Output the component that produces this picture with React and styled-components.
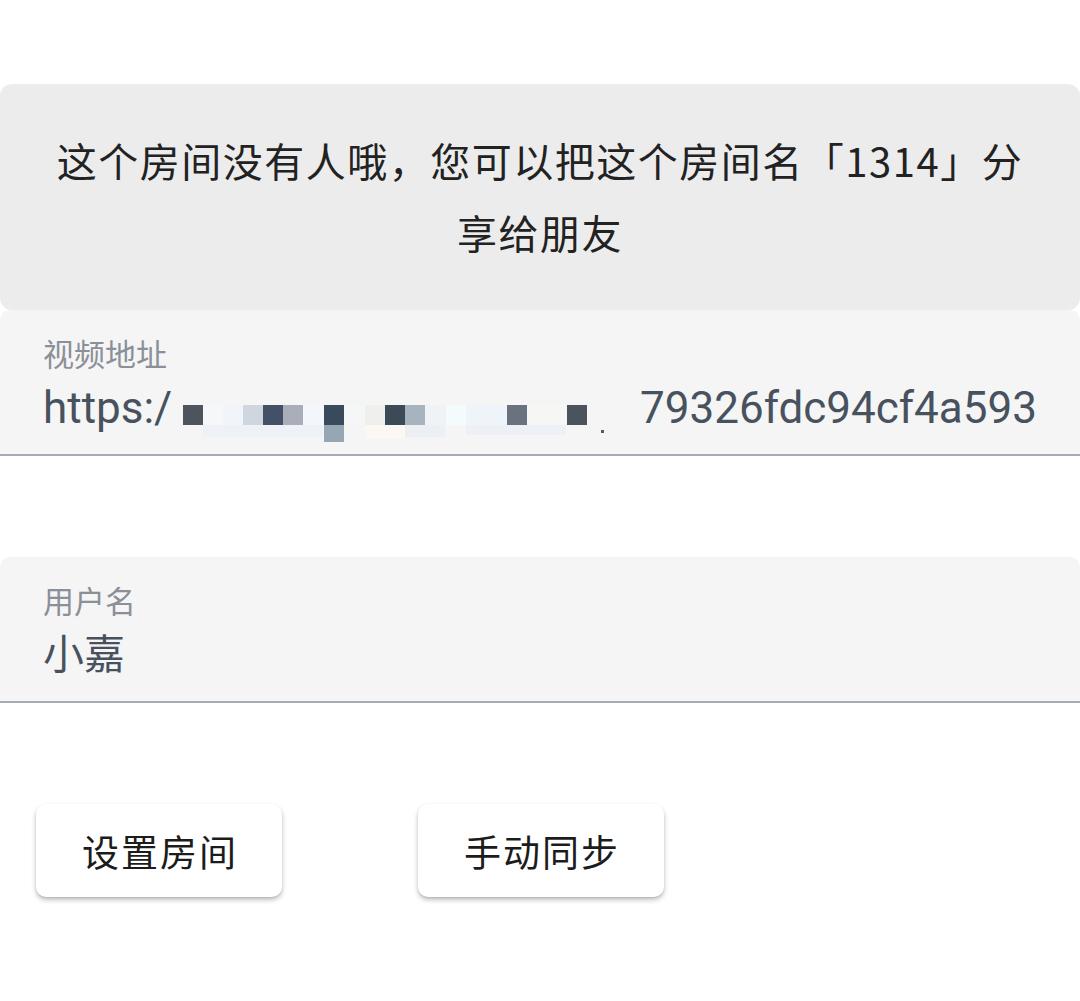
import styled, { createGlobalStyle } from 'styled-components';

const GlobalStyle = createGlobalStyle`
  html, body {
    margin: 0;
    padding: 0;
    background: #ffffff;
  }
  body {
    font-family: Roboto, "Noto Sans CJK SC", sans-serif;
    color: #222222;
  }
`;

const Page = styled.main`
  width: 1080px;
  min-height: 1001px;
  padding-top: 84px;
  box-sizing: border-box;
  display: flex;
  flex-direction: column;
`;

const Alert = styled.div`
  background: #ececec;
  border-radius: 12px;
  padding: 40px 48px 42px;
  text-align: center;
  font-size: 40px;
  line-height: 72px;
  letter-spacing: 1.5px;
  color: #222222;
  font-family: "Noto Sans CJK SC", sans-serif;
`;

const Field = styled.div`
  background: #f5f5f5;
  border-radius: 10px 10px 0 0;
  border-bottom: 2px solid #a6acb4;
  padding: 25px 43px 22px;
  display: flex;
  flex-direction: column;
  gap: 13px;
  margin-top: ${({ $gap }) => $gap || 0}px;
  overflow: hidden;
`;

const Label = styled.div`
  font-family: "Noto Sans CJK SC", sans-serif;
  font-size: 31px;
  line-height: 36px;
  color: #8b9098;
`;

const Value = styled.div`
  display: flex;
  align-items: flex-start;
  white-space: nowrap;
  font-size: ${({ $size }) => $size || 44}px;
  line-height: 48px;
  height: 48px;
  color: #48525e;
  font-family: Roboto, "Noto Sans CJK SC", sans-serif;
`;

const Prefix = styled.span`
  display: inline-block;
  width: 140px;
  flex: none;
`;

const Mosaic = styled.svg`
  flex: none;
  display: block;
  overflow: visible;
`;

const ButtonRow = styled.div`
  display: flex;
  gap: 136px;
  padding: 0 36px;
  margin-top: 101px;
`;

const Button = styled.button`
  width: 246px;
  height: 93px;
  border: none;
  border-radius: 10px;
  background: #ffffff;
  box-shadow: 0 3px 5px rgba(0, 0, 0, 0.24), 0 1px 2px rgba(0, 0, 0, 0.1);
  font-family: "Noto Sans CJK SC", sans-serif;
  font-size: 37px;
  letter-spacing: 2px;
  color: #1c1c1c;
  cursor: pointer;
  padding: 0 0 0 2px;
`;

// pixel blocks covering the censored part of the url
const blocks = [
  [0, 21, 20, 20, '#4d545e'],
  [20, 21, 20, 20, '#f6f7f9'],
  [40, 21, 20, 20, '#f1f4f8'],
  [60, 21, 20, 20, '#d0d6df'],
  [80, 21, 20, 20, '#445068'],
  [100, 21, 20, 20, '#aaaeba'],
  [120, 21, 21, 20, '#f3f6fa'],
  [141, 21, 20, 20, '#3a4a5e'],
  [141, 41, 20, 17, '#97a6b3'],
  [161, 21, 21, 20, '#f5f6f7'],
  [182, 21, 20, 20, '#efefed'],
  [202, 21, 20, 20, '#3c4a58'],
  [222, 21, 20, 20, '#a7b3bd'],
  [242, 21, 21, 20, '#f0f3f5'],
  [263, 21, 20, 20, '#f4fbfd'],
  [283, 21, 41, 20, '#eff4fa'],
  [324, 21, 20, 20, '#69727e'],
  [344, 21, 40, 20, '#f6f6f5'],
  [384, 21, 20, 20, '#4b535d'],
  [20, 41, 120, 12, '#eef2f7'],
  [182, 41, 40, 14, '#fbf7f2'],
  [222, 41, 40, 12, '#eceff3'],
  [283, 41, 100, 10, '#edf1f6'],
  [418, 46, 3, 3, '#555b63'],
];

function UrlValue() {
  return (
    <Value>
      <Prefix>https:/</Prefix>
      <Mosaic width="457" height="48" viewBox="0 0 457 48">
        {blocks.map(([x, y, w, h, c], i) => (
          <rect key={i} x={x} y={y} width={w} height={h} fill={c} />
        ))}
      </Mosaic>
      <span>79326fdc94cf4a593</span>
    </Value>
  );
}

export default function App() {
  return (
    <>
      <GlobalStyle />
      <Page>
        <Alert>这个房间没有人哦，您可以把这个房间名「1314」分享给朋友</Alert>
        <Field>
          <Label>视频地址</Label>
          <UrlValue />
        </Field>
        <Field $gap={101}>
          <Label>用户名</Label>
          <Value $size={41}>小嘉</Value>
        </Field>
        <ButtonRow>
          <Button>设置房间</Button>
          <Button>手动同步</Button>
        </ButtonRow>
      </Page>
    </>
  );
}
